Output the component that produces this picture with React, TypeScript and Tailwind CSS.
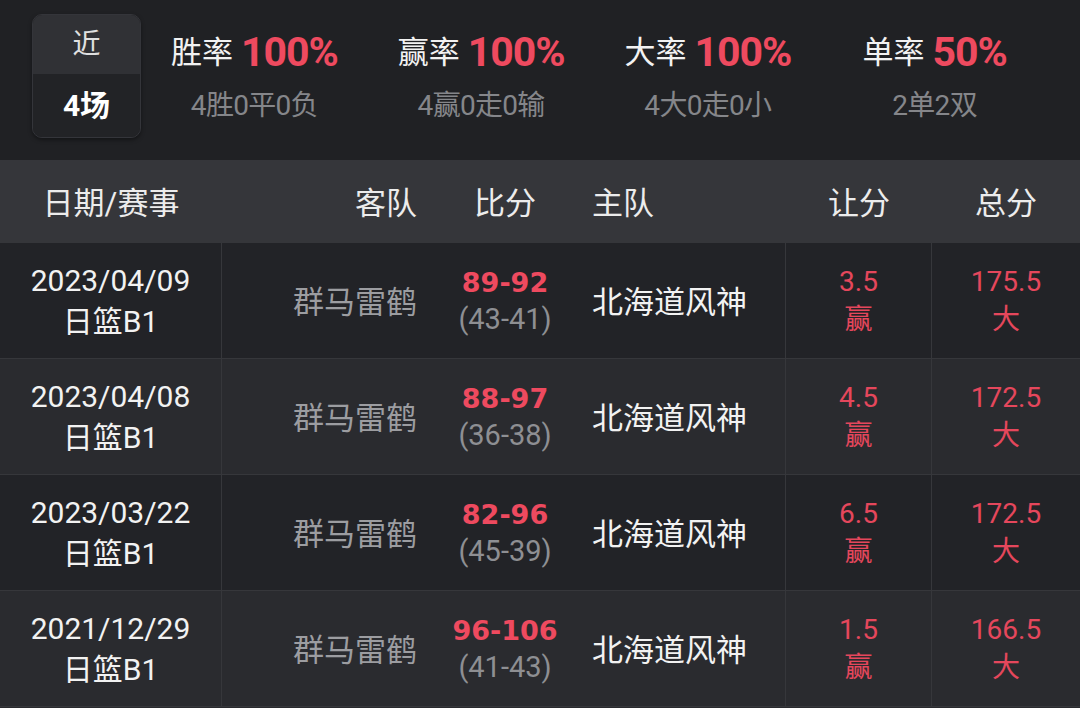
import type { FC } from 'react';

const FONT = { fontFamily: 'Roboto, "Noto Sans CJK SC", sans-serif' };
const WIDE = { fontFamily: '"DejaVu Sans", "Noto Sans CJK SC", sans-serif' };

interface Stat {
  label: string;
  rate: string;
  detail: string;
}

const stats: Stat[] = [
  { label: '胜率', rate: '100%', detail: '4胜0平0负' },
  { label: '赢率', rate: '100%', detail: '4赢0走0输' },
  { label: '大率', rate: '100%', detail: '4大0走0小' },
  { label: '单率', rate: '50%', detail: '2单2双' },
];

interface Match {
  date: string;
  league: string;
  away: string;
  score: string;
  half: string;
  home: string;
  handicap: string;
  handicapResult: string;
  total: string;
  totalResult: string;
}

const matches: Match[] = [
  { date: '2023/04/09', league: '日篮B1', away: '群马雷鹤', score: '89-92', half: '(43-41)', home: '北海道风神', handicap: '3.5', handicapResult: '赢', total: '175.5', totalResult: '大' },
  { date: '2023/04/08', league: '日篮B1', away: '群马雷鹤', score: '88-97', half: '(36-38)', home: '北海道风神', handicap: '4.5', handicapResult: '赢', total: '172.5', totalResult: '大' },
  { date: '2023/03/22', league: '日篮B1', away: '群马雷鹤', score: '82-96', half: '(45-39)', home: '北海道风神', handicap: '6.5', handicapResult: '赢', total: '172.5', totalResult: '大' },
  { date: '2021/12/29', league: '日篮B1', away: '群马雷鹤', score: '96-106', half: '(41-43)', home: '北海道风神', handicap: '1.5', handicapResult: '赢', total: '166.5', totalResult: '大' },
];

const StatBlock: FC<{ stat: Stat }> = ({ stat }) => (
  <div className="flex-1 flex flex-col items-center">
    <div className="flex items-center gap-[8px] h-[52px]">
      <span className="text-[31px] text-[#f2f2f2]">{stat.label}</span>
      <span className="text-[41px] font-bold text-[#ee4a5f] tracking-tight">{stat.rate}</span>
    </div>
    <div className="mt-[7px] text-[28px] leading-[40px] text-[#85868a] tracking-tight">{stat.detail}</div>
  </div>
);

const MatchRow: FC<{ match: Match; index: number }> = ({ match, index }) => (
  <div
    className={`flex h-[116px] border-b border-[#36373b] ${
      index % 2 === 0 ? 'bg-[#222327]' : 'bg-[#2a2b2f]'
    }`}
  >
    <div className="w-[222px] flex flex-col items-center justify-center border-r border-[#36373b] text-[30px] leading-[41px] text-[#f2f2f2]">
      <span>{match.date}</span>
      <span>{match.league}</span>
    </div>
    <div className="w-[223px] flex items-center justify-end pr-[28px] pt-[5px] text-[31px] text-[#9c9da1]">
      {match.away}
    </div>
    <div className="w-[120px] flex flex-col items-center justify-center leading-[37px]">
      <span className="text-[27px] font-bold text-[#ee4a5f]" style={WIDE}>{match.score}</span>
      <span className="text-[29px] text-[#8e8f93]">{match.half}</span>
    </div>
    <div className="w-[221px] flex items-center pl-[27px] pt-[5px] text-[31px] text-[#f2f2f2] border-r border-[#36373b]">
      {match.home}
    </div>
    <div className="w-[146px] flex flex-col items-center justify-center border-r border-[#36373b] text-[28px] leading-[38px] text-[#e5475c]">
      <span>{match.handicap}</span>
      <span>{match.handicapResult}</span>
    </div>
    <div className="flex-1 flex flex-col items-center justify-center text-[28px] leading-[38px] text-[#e5475c]">
      <span>{match.total}</span>
      <span>{match.totalResult}</span>
    </div>
  </div>
);

export default function App() {
  return (
    <div className="w-[1080px] h-[708px] overflow-hidden bg-[#2a2b2f]" style={FONT}>
      <div className="h-[160px] bg-[#202124] flex items-start pt-[14px] px-[32px]">
        <div className="w-[109px] h-[124px] rounded-[10px] overflow-hidden border border-[#34353a] flex flex-col shadow-[0_2px_4px_rgba(0,0,0,0.4)]">
          <div className="h-[59px] bg-[#303135] flex items-center justify-center text-[28px] text-[#e0e0e0]">
            近
          </div>
          <div className="flex-1 bg-[#222326] flex items-center justify-center text-[30px] font-bold text-white">
            4场
          </div>
        </div>
        <div className="flex-1 flex pt-[13px]">
          {stats.map((s) => (
            <StatBlock key={s.label} stat={s} />
          ))}
        </div>
      </div>

      <div className="h-[83px] bg-[#35363a] flex items-center pt-[6px] text-[31px] text-[#ececec]">
        <div className="w-[222px] text-center">日期/赛事</div>
        <div className="w-[223px] text-right pr-[28px]">客队</div>
        <div className="w-[120px] text-center">比分</div>
        <div className="w-[221px] pl-[27px]">主队</div>
        <div className="w-[146px] text-center">让分</div>
        <div className="flex-1 text-center">总分</div>
      </div>

      {matches.map((m, i) => (
        <MatchRow key={m.date} match={m} index={i} />
      ))}
    </div>
  );
}
